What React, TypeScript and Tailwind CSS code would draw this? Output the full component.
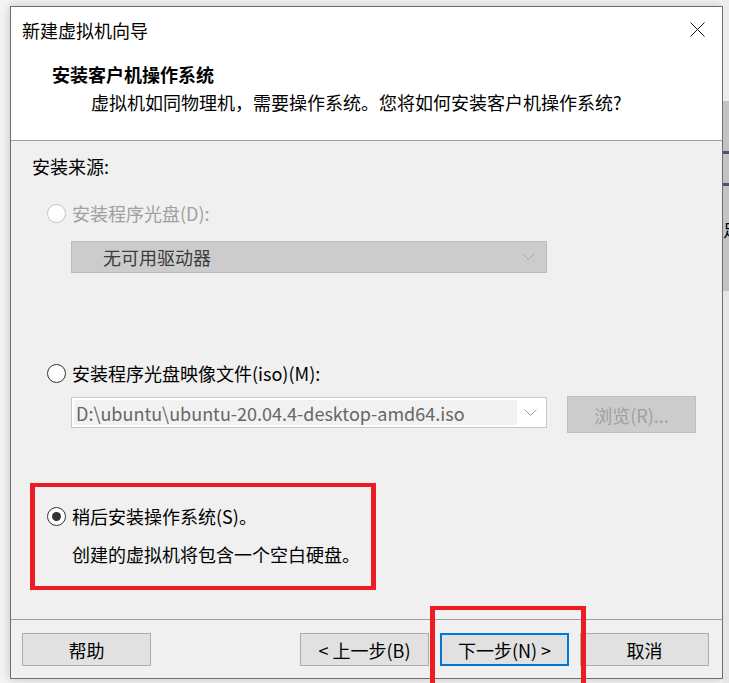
import React from "react";

const font = { fontFamily: '"Noto Sans CJK SC", "Noto Sans", sans-serif' };

const Chevron = ({ color }: { color: string }) => (
  <svg width="13" height="8" viewBox="0 0 13 8" fill="none">
    <polyline points="0.5,0.5 6.5,6.5 12.5,0.5" stroke={color} strokeWidth="1" />
  </svg>
);

const Radio = ({ state }: { state: "disabled" | "off" | "on" }) => (
  <span
    className={
      "w-[19px] h-[19px] rounded-full bg-white flex items-center justify-center shrink-0 " +
      (state === "disabled" ? "border border-[#c4c4c4]" : "border-[1.5px] border-[#333333]")
    }
  >
    {state === "on" && <span className="w-[9px] h-[9px] rounded-full bg-[#333333]" />}
  </span>
);

const FooterButton = ({ label, primary }: { label: string; primary?: boolean }) => (
  <button
    className={
      "w-[129px] h-[33px] bg-[#e1e1e1] text-[18px] text-black leading-6 flex items-center justify-center " +
      (primary ? "border-2 border-[#0078d7]" : "border border-[#adadad]")
    }
  >
    {label}
  </button>
);

const App = () => {
  return (
    <div className="relative w-[729px] h-[683px] overflow-hidden bg-[#f4f4f4] flex" style={font}>
      <div className="w-[10px] shrink-0" />

      {/* Dialog */}
      <div className="w-[713px] h-[673px] mt-[6px] shrink-0 border border-[#6e6e6e] bg-white flex flex-col shadow-[0_0_10px_rgba(0,0,0,0.2)]">
        {/* Title bar */}
        <div className="h-[45px] shrink-0 flex items-center justify-between pl-[11px] pr-[17px]">
          <span className="text-[18px] leading-6 text-black">新建虚拟机向导</span>
          <svg width="15" height="15" viewBox="0 0 15 15">
            <line x1="0.5" y1="0.5" x2="14.5" y2="14.5" stroke="#111" strokeWidth="1" />
            <line x1="14.5" y1="0.5" x2="0.5" y2="14.5" stroke="#111" strokeWidth="1" />
          </svg>
        </div>

        {/* Header */}
        <div className="shrink-0 pt-[10px] pb-[26px] border-b border-[#a0a0a0]">
          <div className="pl-[41px] text-[18px] leading-6 font-bold text-black">安装客户机操作系统</div>
          <div className="pl-[80px] mt-[4px] text-[18px] leading-6 text-black">
            虚拟机如同物理机，需要操作系统。您将如何安装客户机操作系统?
          </div>
        </div>

        {/* Body */}
        <div className="flex-1 bg-[#f0f0f0] pl-[21px] pt-[13px] flex flex-col text-[18px] leading-6">
          <div className="text-black">安装来源:</div>

          <div className="mt-[23px] ml-[15px] flex items-center gap-[6px] text-[#a0a0a0]">
            <Radio state="disabled" />
            <span>安装程序光盘(D):</span>
          </div>
          <div className="mt-[16px] ml-[39px] w-[476px] h-[32px] bg-[#cccccc] border border-[#bcbcbc] flex items-center justify-between pl-[31px] pr-[11px]">
            <span className="text-[#3c3c3c]">无可用驱动器</span>
            <Chevron color="#a8a8a8" />
          </div>

          <div className="mt-[88px] ml-[15px] flex items-center gap-[6px] text-black">
            <Radio state="off" />
            <span>安装程序光盘映像文件(iso)(M):</span>
          </div>
          <div className="mt-[11px] flex items-start">
            <div className="mt-[1px] ml-[39px] w-[476px] h-[31px] bg-white border border-[#c8c8c8] flex items-center p-[2px]">
              <div className="flex-1 h-full bg-[#f2f2f2] flex items-center pl-[2px] text-[#666666]">
                D:\ubuntu\ubuntu-20.04.4-desktop-amd64.iso
              </div>
              <div className="w-[27px] flex justify-center">
                <Chevron color="#9a9a9a" />
              </div>
            </div>
            <button className="ml-[20px] w-[129px] h-[37px] bg-[#cccccc] border border-[#bfbfbf] text-[#a0a0a0] flex items-center justify-center">
              浏览(R)...
            </button>
          </div>

          <div className="mt-[71px] ml-[15px] flex items-center gap-[6px] text-black">
            <Radio state="on" />
            <span>稍后安装操作系统(S)。</span>
          </div>
          <div className="mt-[14px] ml-[40px] text-black">创建的虚拟机将包含一个空白硬盘。</div>
        </div>

        {/* Footer */}
        <div className="h-[59px] shrink-0 border-t border-[#a0a0a0] bg-[#f0f0f0] pt-[13px] pl-[11px] pr-[13px] flex items-start">
          <FooterButton label="帮助" />
          <div className="flex-1" />
          <div className="flex gap-[11px]">
            <FooterButton label="< 上一步(B)" />
            <FooterButton label="下一步(N) >" primary />
            <FooterButton label="取消" />
          </div>
        </div>
      </div>

      {/* Window behind, at the right edge */}
      <div className="flex-1 flex flex-col overflow-hidden">
        <div className="h-[101px] bg-[#ececec]" />
        <div className="h-[190px] bg-[#c3c3c3] flex flex-col">
          <div className="mt-[50px] h-[3px] bg-[#4b5563]" />
          <div className="mt-[29px] h-[3px] bg-[#4b5563]" />
          <div className="mt-[34px] text-[17px] leading-5 text-black whitespace-nowrap">足</div>
        </div>
        <div className="flex-1 bg-[#e6e6e6]" />
      </div>

      {/* Annotation boxes */}
      <div className="absolute left-[30px] top-[483px] w-[346px] h-[107px] border-x-[5px] border-y-4 border-[#ed1c24]" />
      <div className="absolute left-[430px] top-[606px] w-[156px] h-[90px] border-x-[5px] border-y-4 border-[#ed1c24]" />
    </div>
  );
};

export default App;
